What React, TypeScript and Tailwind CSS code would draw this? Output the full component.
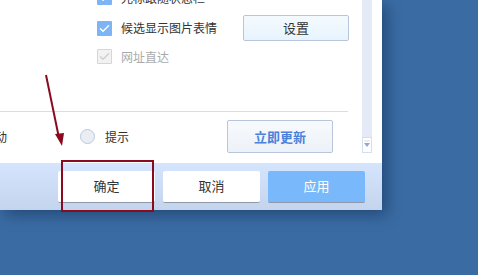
const font = { fontFamily: '"Noto Sans CJK SC", "Noto Sans", sans-serif' };

const Check = ({ disabled = false }: { disabled?: boolean }) => (
  <span
    className={`flex h-[15px] w-[15px] shrink-0 items-center justify-center rounded-[1px] ${
      disabled ? 'border border-[#d6d6d6] bg-[#f2f2f2]' : 'bg-[#7db4f5]'
    }`}
  >
    <svg viewBox="0 0 16 16" className="h-[13px] w-[13px]" fill="none">
      <path
        d="M3 8.2l3.2 3.2L13 4.6"
        stroke={disabled ? '#cfcfcf' : '#ffffff'}
        strokeWidth="1.8"
        strokeLinecap="round"
        strokeLinejoin="round"
      />
    </svg>
  </span>
);

const FooterButton = ({ label, primary = false }: { label: string; primary?: boolean }) => (
  <button
    className={`flex h-[32px] w-[97px] items-center justify-center rounded-[2px] border-b border-[#8e99ab] text-[13px] ${
      primary ? 'bg-[#79b8fb] text-white' : 'bg-white text-[#333]'
    }`}
  >
    {label}
  </button>
);

export default function App() {
  return (
    <div className="relative h-[275px] w-[478px] overflow-hidden bg-[#3a6ca3]" style={font}>
      <div className="flex h-[210px] w-[382px] flex-col shadow-[5px_5px_14px_rgba(10,30,70,0.45)]">
        {/* body */}
        <div className="flex h-[163px] bg-white">
          <div className="flex w-[362px] flex-col">
            <div className="-mt-[10px] flex flex-col pl-[97px] text-[12px] text-[#333]">
              <div className="flex h-[15px] items-center gap-[9px]">
                <Check />
                <span className="leading-none">光标跟随状态栏</span>
              </div>
              <div className="mt-[10px] flex h-[26px] items-center">
                <Check />
                <span className="ml-[9px] w-[122px]">候选显示图片表情</span>
                <button className="flex h-[26px] w-[106px] items-center justify-center rounded-[2px] border border-[#b7c6dd] bg-gradient-to-b from-[#f4fafe] to-[#e8f4fd] text-[13px] text-[#333]">
                  设置
                </button>
              </div>
              <div className="mt-[8px] flex h-[15px] items-center gap-[9px]">
                <Check disabled />
                <span className="text-[#aaa]">网址直达</span>
              </div>
            </div>
            <div className="mt-[47px] h-px w-[348px] bg-[#d3dded]" />
            <div className="mt-[8px] flex h-[33px] items-center text-[12px] text-[#333]">
              <span className="-ml-[17px] w-[97px]">自动</span>
              <span className="h-[15px] w-[15px] rounded-full border border-[#b9c9e0] bg-[#eaeef4]" />
              <span className="ml-[10px] w-[122px]">提示</span>
              <button className="flex h-[33px] w-[106px] items-center justify-center rounded-[2px] border border-[#b7c6dd] bg-gradient-to-b from-[#f7fafd] to-[#edf2f8] text-[13px] font-bold text-[#4a82dc]">
                立即更新
              </button>
            </div>
          </div>
          {/* scrollbar */}
          <div className="flex h-[153px] w-[10px] flex-col bg-[#e4ebf6]">
            <div className="flex-1" />
            <div className="flex h-[16px] flex-col items-center border border-[#d5deec] bg-white pt-[2px]">
              <div className="h-[2px] w-[6px] rounded-b-full bg-[#e4ebf6]" />
              <svg viewBox="0 0 6 4" className="mt-[1px] h-[4px] w-[6px]">
                <path d="M0 0h6L3 4z" fill="#8fa6dc" />
              </svg>
            </div>
          </div>
        </div>
        {/* footer */}
        <div className="flex h-[47px] items-center justify-end gap-[8px] bg-gradient-to-b from-[#d5e5fd] to-[#c4d4ec] pr-[17px]">
          <FooterButton label="确定" />
          <FooterButton label="取消" />
          <FooterButton label="应用" primary />
        </div>
      </div>

      {/* annotation */}
      <div className="absolute left-[61px] top-[160px] h-[52px] w-[93px] border-2 border-[#8a0a1f]" />
      <svg className="absolute left-0 top-0" width="478" height="275">
        <line x1="46" y1="75" x2="59" y2="138" stroke="#8a0a1f" strokeWidth="2" />
        <path d="M55 134l7 12 2-13z" fill="#8a0a1f" />
      </svg>
    </div>
  );
}
